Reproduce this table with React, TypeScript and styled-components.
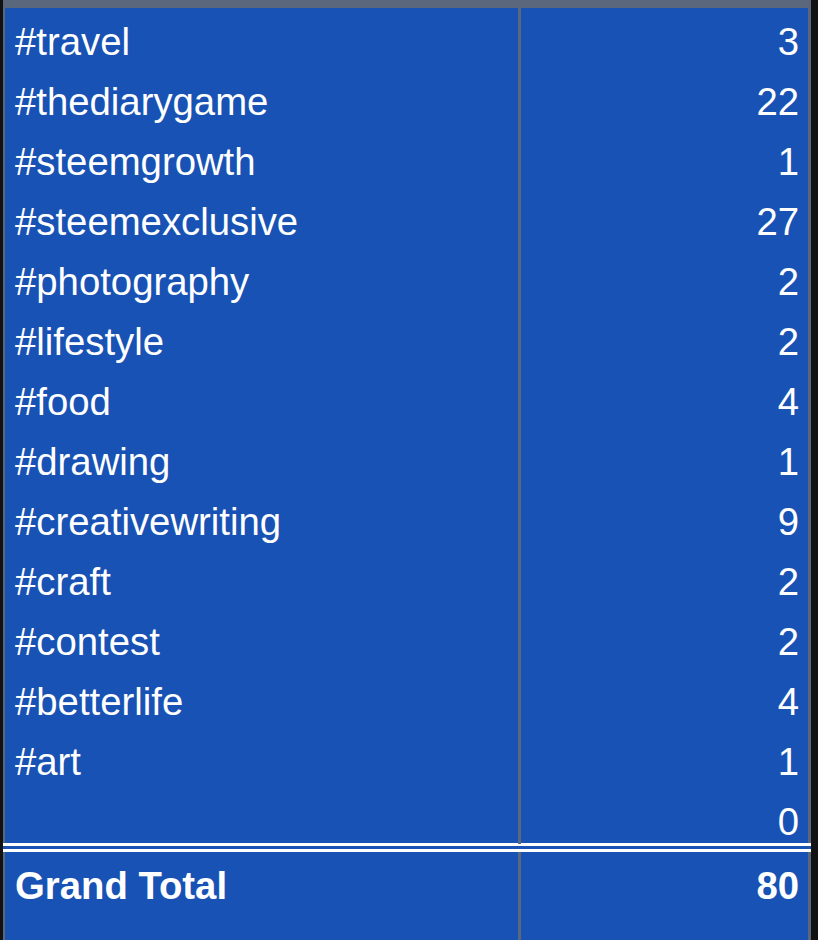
import React from 'react';
import styled, { createGlobalStyle } from 'styled-components';

const GlobalStyle = createGlobalStyle`
  html, body {
    margin: 0;
    padding: 0;
    overflow: hidden;
    background: #121212;
  }
`;

const Sheet = styled.div`
  margin-left: 3px;
  width: 808px;
  border-top: 8px solid #5a677c;
  background: #1852b4;
  font-family: "Liberation Sans", Arial, sans-serif;
  color: #ffffff;
`;

const Section = styled.div`
  border-left: 2px solid #5a677c;
  border-right: 3px solid #5a677c;
`;

const Row = styled.div<{ $last?: boolean; $footer?: boolean }>`
  display: grid;
  grid-template-columns: 516px 1fr;
  font-weight: ${p => (p.$footer ? 700 : 400)};

  & > div {
    padding-bottom: ${p => (p.$footer ? '40px' : p.$last ? '0' : '4px')};
  }
`;

const Cell = styled.div<{ $right?: boolean }>`
  padding: 12px 9px 4px 10px;
  font-size: 38.3px;
  line-height: 44px;
  white-space: nowrap;
  text-align: ${p => (p.$right ? 'right' : 'left')};
  border-right: ${p => (p.$right ? 'none' : '3px solid #5a677c')};
`;

const DoubleRule = styled.div`
  border-top: 9px double #ffffff;
  margin-top: -1px;
`;

const tags: [string, number][] = [
  ['#travel', 3],
  ['#thediarygame', 22],
  ['#steemgrowth', 1],
  ['#steemexclusive', 27],
  ['#photography', 2],
  ['#lifestyle', 2],
  ['#food', 4],
  ['#drawing', 1],
  ['#creativewriting', 9],
  ['#craft', 2],
  ['#contest', 2],
  ['#betterlife', 4],
  ['#art', 1],
  ['', 0],
];

function App() {
  const total = tags.reduce((acc, t) => acc + t[1], 0);

  return (
    <>
      <GlobalStyle />
      <Sheet>
        <Section>
          {tags.map(([tag, count], i) => (
            <Row key={i} $last={i === tags.length - 1}>
              <Cell>{tag}</Cell>
              <Cell $right>{count}</Cell>
            </Row>
          ))}
        </Section>
        <DoubleRule />
        <Section>
          <Row $footer>
            <Cell>Grand Total</Cell>
            <Cell $right>{total}</Cell>
          </Row>
        </Section>
      </Sheet>
    </>
  );
}

export default App;
